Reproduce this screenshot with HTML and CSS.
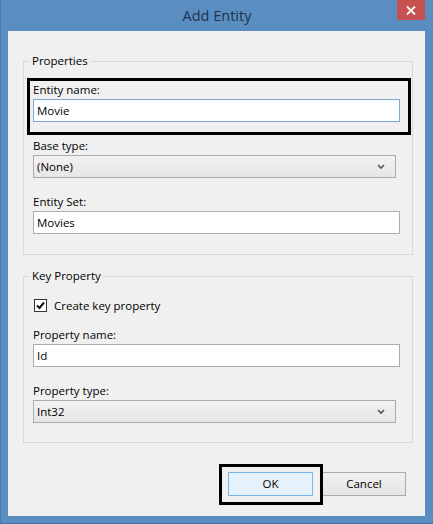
FILE: index.html
```html
<!DOCTYPE html>
<html>
<head>
<meta charset="utf-8">
<title>Add Entity</title>
<link rel="stylesheet" href="styles.css">
</head>
<body>
<div class="window">
  <div class="titlebar">
    <div class="title">Add Entity</div>
    <div class="close">
      <svg width="10" height="9" viewBox="0 0 10 9"><path d="M1 0.5 L9 8.5 M9 0.5 L1 8.5" stroke="#fff" stroke-width="1.8" fill="none"/></svg>
    </div>
  </div>
  <div class="client">
    <fieldset class="group">
      <legend>Properties</legend>
      <div class="field highlight">
        <div class="label">Entity name:</div>
        <div class="textbox focused">Movie</div>
      </div>
      <div class="field">
        <div class="label">Base type:</div>
        <div class="combo"><span>(None)</span>
          <svg width="8" height="6" viewBox="0 0 8 6"><path d="M1 1 L4 4 L7 1" stroke="#555" stroke-width="1.6" fill="none"/></svg>
        </div>
      </div>
      <div class="field">
        <div class="label">Entity Set:</div>
        <div class="textbox">Movies</div>
      </div>
    </fieldset>
    <fieldset class="group key">
      <legend>Key Property</legend>
      <div class="check-row">
        <span class="checkbox">
          <svg width="11" height="11" viewBox="0 0 11 11"><path d="M2 5.5 L4.5 8 L9 2.5" stroke="#111" stroke-width="2" fill="none"/></svg>
        </span>
        <span>Create key property</span>
      </div>
      <div class="field first">
        <div class="label">Property name:</div>
        <div class="textbox">Id</div>
      </div>
      <div class="field">
        <div class="label">Property type:</div>
        <div class="combo"><span>Int32</span>
          <svg width="8" height="6" viewBox="0 0 8 6"><path d="M1 1 L4 4 L7 1" stroke="#555" stroke-width="1.6" fill="none"/></svg>
        </div>
      </div>
    </fieldset>
    <div class="buttons">
      <span class="btn-highlight"><button class="btn default">OK</button></span>
      <button class="btn">Cancel</button>
    </div>
  </div>
</div>
</body>
</html>
```
FILE: styles.css
```css
html, body {
  margin: 0;
  padding: 0;
}
body {
  width: 433px;
  height: 524px;
  overflow: hidden;
  font-family: "Open Sans", "Noto Sans", "Liberation Sans", sans-serif;
  font-size: 11.5px;
  color: #000;
}
.window {
  width: 433px;
  height: 524px;
  box-sizing: border-box;
  background: #5b8ec0;
  border-left: 1px solid #4a7bad;
  border-bottom: 1px solid #45739f;
  display: flex;
  flex-direction: column;
}
.titlebar {
  height: 31px;
  flex: none;
  display: grid;
  grid-template-columns: 1fr auto 1fr;
  padding: 0 8px 0 8px;
}
.title {
  grid-column: 2;
  align-self: center;
  font-size: 14.5px;
  color: #1f3350;
  line-height: 20px;
  margin-top: 1px;
}
.close {
  grid-column: 3;
  justify-self: end;
  align-self: start;
  width: 28px;
  height: 20px;
  background: #c75050;
  display: flex;
  align-items: center;
  justify-content: center;
}
.close svg {
  display: block;
}
.client {
  flex: none;
  height: 485px;
  margin: 0 8px 0 7px;
  background: #f0f0f0;
  padding: 22px 12px 0 15px;
  box-sizing: border-box;
}
.group {
  margin: 0;
  border: 1px solid #d9d9d9;
  padding: 13px 12px 20px 9px;
  min-width: 0;
}
.group legend {
  padding: 0 2px;
  margin-left: -3px;
  line-height: 16px;
  color: #000;
}
.group.key {
  margin-top: 13px;
  padding-bottom: 19px;
}
.field {
  margin-top: 16px;
}
.field:first-of-type {
  margin-top: 0;
}
.field.first {
  margin-top: 14px;
}
.label {
  line-height: 15px;
  margin-bottom: 2px;
  white-space: nowrap;
}
.textbox {
  height: 23px;
  box-sizing: border-box;
  border: 1px solid #abadb3;
  background: #fff;
  padding: 0 3px;
  line-height: 21px;
}
.textbox.focused {
  border-color: #7ba7d8;
}
.combo {
  width: 363px;
  height: 23px;
  box-sizing: border-box;
  border: 1px solid #acacac;
  background: linear-gradient(#f2f2f2, #e6e6e6);
  padding: 0 4px 0 3px;
  line-height: 21px;
  display: flex;
  align-items: center;
  justify-content: space-between;
}
.combo svg {
  display: block;
  margin-right: 6px;
  margin-top: 1px;
}
.highlight {
  position: relative;
}
.highlight::after {
  content: "";
  position: absolute;
  top: -4px;
  left: -6px;
  right: -11px;
  bottom: -13px;
  border: 3px solid #000;
  pointer-events: none;
}
.check-row {
  display: flex;
  align-items: center;
  height: 16px;
  gap: 7px;
  padding-left: 1px;
}
.checkbox {
  width: 13px;
  height: 13px;
  box-sizing: border-box;
  border: 1px solid #333;
  background: #fff;
  display: flex;
  align-items: center;
  justify-content: center;
}
.checkbox svg {
  display: block;
}
.buttons {
  display: flex;
  justify-content: flex-end;
  gap: 9px;
  margin-top: 29px;
  padding-right: 7px;
}
.btn {
  font: inherit;
  color: #000;
  height: 24px;
  box-sizing: border-box;
  border: 1px solid #acacac;
  background: linear-gradient(#f0f0f0, #e5e5e5);
  width: 84px;
  padding: 0;
  margin: 0;
  line-height: 22px;
  display: block;
}
.btn.default {
  width: 85px;
  background: #e5f1fb;
  border-color: #7eb4ea;
}
.btn-highlight {
  position: relative;
  display: block;
}
.btn-highlight::after {
  content: "";
  position: absolute;
  top: -8px;
  left: -9px;
  right: -10px;
  bottom: -9px;
  border: 3px solid #000;
  pointer-events: none;
}
```
